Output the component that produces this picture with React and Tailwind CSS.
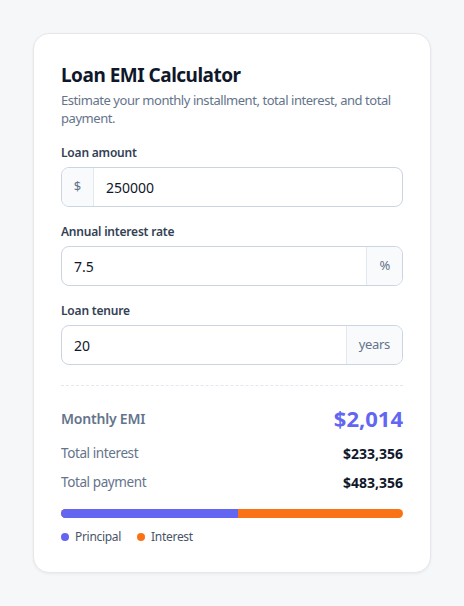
import React from "react";

function Field({ label, value, prefix, suffix }) {
  return (
    <div className="mt-4 first:mt-0">
      <div className="text-[12px] leading-[18px] font-semibold tracking-[-0.2px] text-[#334155]">{label}</div>
      <div className="mt-[5px] flex h-10 overflow-hidden rounded-lg border border-[#cbd5e1] bg-white">
        {prefix && (
          <div className="flex w-8 items-center justify-center border-r border-[#e2e8f0] bg-[#f8fafc] text-[13px] text-[#64748b]">
            {prefix}
          </div>
        )}
        <div className="flex flex-1 items-center px-3 text-[14px] text-[#0f172a]">{value}</div>
        {suffix && (
          <div className="flex items-center border-l border-[#e2e8f0] bg-[#f8fafc] px-3 text-[13px] tracking-[-0.3px] text-[#64748b]">
            {suffix}
          </div>
        )}
      </div>
    </div>
  );
}

export default function App() {
  const principal = 250000;
  const total = 483356;
  const pct = (principal / total) * 100;
  return (
    <div
      className="min-h-[606px] w-full bg-[#f6f7f9] pt-[33px] pl-[33px]"
      style={{ fontFamily: '"Noto Sans", "Open Sans", sans-serif' }}
    >
      <div className="w-[398px] rounded-2xl border border-[#e5e7eb] bg-white px-[27px] pt-[27px] pb-[26px] shadow-[0_1px_3px_rgba(15,23,42,0.06)]">
        <h1 className="text-[19px] leading-7 font-bold tracking-[-0.5px] text-[#0f172a]">Loan EMI Calculator</h1>
        <p className="mt-[2px] text-[13px] leading-[18px] tracking-[-0.45px] text-[#64748b]">
          Estimate your monthly installment, total interest, and total payment.
        </p>
        <div className="mt-[17px]">
          <Field label="Loan amount" value="250000" prefix="$" />
          <Field label="Annual interest rate" value="7.5" suffix="%" />
          <Field label="Loan tenure" value="20" suffix="years" />
        </div>
        <div className="mt-5 border-t border-dashed border-[#e2e8f0]" />
        <div className="mt-4 flex h-8 items-center justify-between">
          <span className="text-[14px] font-semibold tracking-[-0.2px] text-[#64748b]">Monthly EMI</span>
          <span className="text-[22px] font-bold text-[#6366f1]">$2,014</span>
        </div>
        <div className="mt-[9px] flex h-5 items-center justify-between">
          <span className="text-[13.5px] tracking-[-0.4px] text-[#64748b]">Total interest</span>
          <span className="text-[14px] font-bold text-[#0f172a]">$233,356</span>
        </div>
        <div className="mt-[9px] flex h-5 items-center justify-between">
          <span className="text-[13.5px] tracking-[-0.4px] text-[#64748b]">Total payment</span>
          <span className="text-[14px] font-bold text-[#0f172a]">$483,356</span>
        </div>
        <div className="mt-[17px] flex h-[9px] overflow-hidden rounded-full bg-[#f97316]">
          <div className="h-full bg-[#6366f1]" style={{ width: `${pct}%` }} />
        </div>
        <div className="mt-[10px] flex h-[18px] items-center gap-4 text-[12px] tracking-[-0.3px] text-[#475569]">
          <div className="flex items-center gap-[6px]">
            <span className="h-2 w-2 rounded-full bg-[#6366f1]" />
            Principal
          </div>
          <div className="flex items-center gap-[6px]">
            <span className="h-2 w-2 rounded-full bg-[#f97316]" />
            Interest
          </div>
        </div>
      </div>
    </div>
  );
}
